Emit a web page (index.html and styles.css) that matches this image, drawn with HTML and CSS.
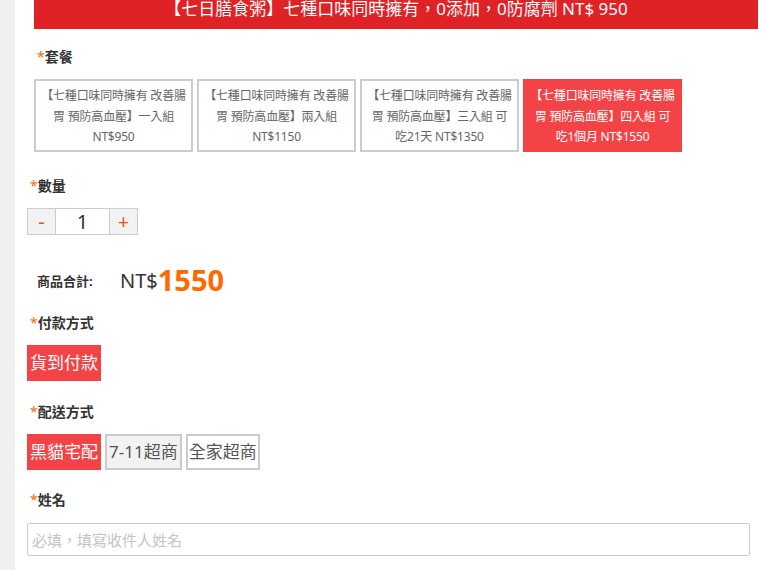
FILE: index.html
```html
<!DOCTYPE html>
<html lang="zh-Hant">
<head>
<meta charset="UTF-8">
<meta name="viewport" content="width=device-width, initial-scale=1.0">
<title>七日膳食粥</title>
<link rel="stylesheet" href="styles.css">
</head>
<body>

<div class="page">
    <div class="side"></div>
    <div class="main">
        <div class="banner">【七日膳食粥】七種口味同時擁有，0添加，0防腐劑 NT$ 950</div>

        <div class="label label-first"><span class="req">*</span>套餐</div>
        <div class="options">
            <div class="option">【七種口味同時擁有 改善腸<br>胃 預防高血壓】一入組<br>NT$950</div>
            <div class="option">【七種口味同時擁有 改善腸<br>胃 預防高血壓】兩入組<br>NT$1150</div>
            <div class="option">【七種口味同時擁有 改善腸<br>胃 預防高血壓】三入組 可<br>吃21天 NT$1350</div>
            <div class="option active">【七種口味同時擁有 改善腸<br>胃 預防高血壓】四入組 可<br>吃1個月 NT$1550</div>
        </div>

        <div class="label"><span class="req">*</span>數量</div>
        <div class="qty">
            <button class="qty-btn">-</button>
            <div class="qty-value">1</div>
            <button class="qty-btn">+</button>
        </div>

        <div class="total">
            <span class="total-label">商品合計:</span>
            <span class="total-cur">NT$</span><span class="total-num">1550</span>
        </div>

        <div class="label"><span class="req">*</span>付款方式</div>
        <div class="choices">
            <div class="choice active">貨到付款</div>
        </div>

        <div class="label"><span class="req">*</span>配送方式</div>
        <div class="choices">
            <div class="choice active">黑貓宅配</div>
            <div class="choice grey">7-11超商</div>
            <div class="choice">全家超商</div>
        </div>

        <div class="label label-name"><span class="req">*</span>姓名</div>
        <input type="text" class="field" placeholder="必填，填寫收件人姓名">
    </div>
</div>

</body>
</html>
```

FILE: styles.css
```css
body {
    font-family: "Noto Sans", "Noto Sans CJK TC", sans-serif;
    margin: 0;
    padding: 0;
    color: #333;
    background: #fff;
    overflow: hidden;
}
.page {
    display: flex;
    min-height: 570px;
}
.side {
    width: 15px;
    background-color: #f0f0f0;
    flex-shrink: 0;
}
.main {
    flex: 1;
}
.banner {
    margin: -11px 6px 0 19px;
    height: 40px;
    line-height: 40px;
    background-color: #de2226;
    color: #fff;
    font-size: 17px;
    text-align: center;
    white-space: nowrap;
}
.label {
    margin-top: 20px;
    padding-left: 15px;
    height: 20px;
    line-height: 20px;
    font-size: 14px;
    font-weight: bold;
    color: #333;
}
.label-first {
    margin-top: 18px;
    padding-left: 22px;
}
.req {
    color: #ff6a00;
    font-weight: normal;
}
.options {
    display: flex;
    gap: 4px;
    margin: 12px 0 0 19px;
}
.option {
    width: 159px;
    height: 73px;
    box-sizing: border-box;
    border: 2px solid #ccc;
    padding: 5px 0 0;
    font-size: 12px;
    line-height: 20.5px;
    color: #666;
    text-align: center;
    white-space: nowrap;
    letter-spacing: -0.2px;
}
.option.active {
    background-color: #f34346;
    border-color: #f34346;
    color: #fff;
}
.options + .label {
    margin-top: 24px;
}
.qty {
    display: flex;
    margin: 12px 0 0 12px;
    width: 111px;
    height: 27px;
    border: 1px solid #ccc;
    box-sizing: border-box;
}
.qty-btn {
    width: 27px;
    border: none;
    background-color: #f2f2f2;
    color: #ec4f2c;
    font-family: inherit;
    font-size: 20px;
    padding: 0;
    line-height: 25px;
}
.qty-value {
    flex: 1;
    border-left: 1px solid #ccc;
    border-right: 1px solid #ccc;
    text-align: center;
    font-size: 20px;
    line-height: 25px;
}
.total {
    display: flex;
    align-items: center;
    margin-top: 30px;
    height: 30px;
    padding-left: 22px;
}
.total-label {
    font-size: 13px;
    font-weight: bold;
    width: 83px;
}
.total-cur {
    font-size: 20px;
    color: #333;
}
.total-num {
    font-size: 29px;
    font-weight: bold;
    color: #ff6a00;
    line-height: 30px;
}
.total + .label {
    margin-top: 18px;
}
.choices {
    display: flex;
    gap: 4px;
    margin: 12px 0 0 12px;
}
.choices + .label {
    margin-top: 21px;
}
.choices + .label-name {
    margin-top: 20px;
}
.choice {
    height: 36px;
    line-height: 32px;
    padding: 0 1px;
    box-sizing: border-box;
    border: 2px solid #ccc;
    font-size: 17px;
    color: #555;
    background: #fff;
    white-space: nowrap;
}
.choice.active {
    background-color: #f34346;
    border-color: #f34346;
    color: #fff;
}
.choice.grey {
    background-color: #f2f2f2;
    padding: 0 2px;
}
.field {
    display: block;
    margin: 13px 0 0 12px;
    width: 723px;
    height: 33px;
    box-sizing: border-box;
    border: 1px solid #ccc;
    border-radius: 2px;
    padding: 0 4px;
    font-family: inherit;
    font-size: 15px;
    color: #333;
}
.field::placeholder {
    color: #c4c4c4;
}
```
